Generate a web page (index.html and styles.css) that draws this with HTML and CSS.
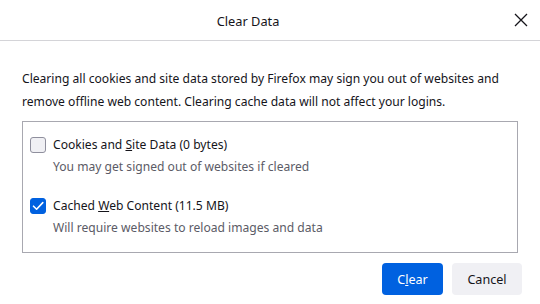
FILE: index.html
```html
<!DOCTYPE html>
<html>
<head>
<meta charset="utf-8">
<link rel="stylesheet" href="styles.css">
</head>
<body>
<div class="dialog">
  <div class="header">
    <div class="title">Clear Data</div>
    <div class="close">
      <svg width="14" height="14" viewBox="0 0 14 14"><path d="M1 1 L13 13 M13 1 L1 13" stroke="#15141a" stroke-width="1.3" fill="none"/></svg>
    </div>
  </div>
  <div class="content">
    <p class="desc">Clearing all cookies and site data stored by Firefox may sign you out of websites and remove offline web content. Clearing cache data will not affect your logins.</p>
    <div class="box">
      <div class="item">
        <div class="row"><span class="cb"></span><span class="label">Cookies and <u>S</u>ite Data (0 bytes)</span></div>
        <div class="sub">You may get signed out of websites if cleared</div>
      </div>
      <div class="item item2">
        <div class="row"><span class="cb checked"><svg width="16" height="16" viewBox="0 0 16 16"><path d="M3.5 8.2 L6.6 11.2 L12.8 4.6" stroke="#fff" stroke-width="1.6" fill="none" stroke-linecap="round" stroke-linejoin="round"/></svg></span><span class="label">Cached <u>W</u>eb Content (11.5 MB)</span></div>
        <div class="sub">Will require websites to reload images and data</div>
      </div>
    </div>
    <div class="footer">
      <button class="btn primary">C<u>l</u>ear</button>
      <button class="btn secondary">Cancel</button>
    </div>
  </div>
</div>
</body>
</html>
```
FILE: styles.css
```css
html, body {
  margin: 0;
  padding: 0;
  background: #ffffff;
}
body {
  font-family: "Noto Sans", "Open Sans", sans-serif;
  color: #15141a;
  font-size: 12.1px;
}
.dialog {
  width: 540px;
  height: 304px;
  background: #fff;
}
.header {
  height: 40px;
  display: flex;
  align-items: center;
  border-bottom: 1px solid #d4d4d8;
}
.title {
  flex: 1;
  text-align: center;
  font-size: 12.8px;
  padding-top: 1px;
}
.close {
  width: 44px;
  display: flex;
  align-items: center;
  padding-left: 18px;
  box-sizing: border-box;
  height: 40px;
}
.content {
  padding: 26px 18px 0 22px;
}
.desc {
  margin: 0;
  line-height: 23px;
  width: 500px;
}
.box {
  margin-top: 8px;
  width: 496px;
  box-sizing: border-box;
  border: 1px solid #a8a8b0;
  padding: 13px 7px 14px 7px;
}
.item2 {
  margin-top: 19px;
}
.row {
  display: flex;
  align-items: center;
  line-height: 20px;
  height: 20px;
}
.cb {
  width: 16px;
  height: 16px;
  box-sizing: border-box;
  border: 1px solid #8f8f9d;
  border-radius: 3px;
  background: #f0f0f4;
  margin-right: 7px;
  display: flex;
}
.cb.checked {
  background: #0061e0;
  border-color: #0061e0;
}
.cb.checked svg {
  margin: -1px;
}
.sub {
  margin-top: 2px;
  line-height: 20px;
  padding-left: 23px;
  color: #5b5b66;
}
.footer {
  margin-top: 10px;
  display: flex;
  justify-content: flex-end;
  gap: 9px;
}
.btn {
  height: 32px;
  border: none;
  border-radius: 4px;
  font-family: "Noto Sans", "Open Sans", sans-serif;
  font-size: 12.6px;
  padding: 0;
}
.primary {
  background: #0061e0;
  color: #fff;
  width: 61px;
}
.secondary {
  background: #f0f0f4;
  color: #15141a;
  width: 70px;
}
```
